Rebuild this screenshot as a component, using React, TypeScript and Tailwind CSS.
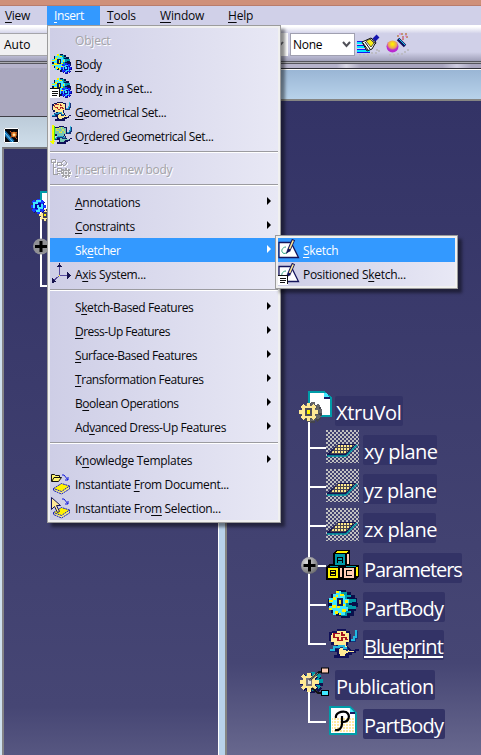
import React from "react";

type P = { x: number; y: number };

const Doc = () => (
  <g shapeRendering="crispEdges">
    <path d="M10 1H25L32 7V25H10Z" fill="#fff" stroke="#009ca8" strokeWidth="2" />
    <path d="M25 2h3l3 5h-6z" fill="#40e8ff" />
    <path d="M25 6h6v2h-6z" fill="#181860" />
  </g>
);

type GearProps = { cx: number; cy: number; r: number; fill: string; edge: string; shade?: string; under?: string; hub?: string; ring?: string };
function Gear({ cx, cy, r, fill, edge, shade, under = "#11104c", hub = "#fff200", ring }: GearProps) {
  const spokes = [0, 45, 90, 135];
  const body = (c: string, dx: number, dy: number, k = 0) => (
    <g transform={`translate(${cx + dx} ${cy + dy})`}>
      {spokes.map((a) => (
        <rect key={a} x={-r * 0.2 - k} y={-r - k} width={r * 0.4 + 2 * k} height={2 * (r + k)} fill={c} transform={`rotate(${a})`} />
      ))}
      <circle r={r * 0.7 + k} fill={c} />
    </g>
  );
  return (
    <g shapeRendering="crispEdges">
      {shade && body(under, r * 0.42, r * 0.14, 0.6)}
      {shade && body(shade, r * 0.45, -r * 0.08, 0)}
      {body(edge, 0.6, 0.5, 0.2)}
      {body(fill, 0, 0)}
      <rect x={cx - r * 0.36} y={cy - r * 0.42} width={r * 0.72} height={r * 0.84} fill={ring ?? edge} />
      <rect x={cx - r * 0.12} y={cy - r * 0.2} width={r * 0.28} height={r * 0.4} fill={hub} />
    </g>
  );
}

const Svg = ({ w, h, children, className = "" }: { w: number; h: number; children: React.ReactNode; className?: string }) => (
  <svg width={w} height={h} viewBox={`0 0 ${w} ${h}`} className={"block shrink-0 " + className}>{children}</svg>
);

const TealGear = () => (
  <g shapeRendering="crispEdges">
    <path d="M10 1h9v2h5v3h4v3h2v5h1v4h-2v4h-2v5h-4v2h-9v-2H9v-3H4v-6H1v-8h3V5h6z" fill="#08104c" />
    <path d="M14 3h6v3h4v4h5v3h-4v4h4v3h-5v4h-4v3h-6z" fill="#009ca8" />
    <path d="M20 8h7v2h-7zM22 14h7v2h-7zM19 20h8v2h-8z" fill="#081048" />
    <path d="M9 2h5v4h4v4h4v4h-3v4h2v4h-3v4h-5v-2h-4v2H6v-5H2v-4h3v-3H2V9h4V5h3z" fill="#40e8ff" />
    <path d="M9 2h3v2H9zM13 5h4v2h-4zM6 8h3v3H6zM2 11h4v2H2zM18 11h3v3h-3zM5 16h4v3H5zM8 22h3v3H8zM15 20h4v3h-4zM10 17h3v2h-3zM2 19h3v2H2zM9 6h2v2H9zM16 15h2v2h-2zM12 24h2v2h-2z" fill="#fff200" />
    <path d="M10 9h6v8h-6z" fill="#102060" /><path d="M12 11h2v4h-2z" fill="#ffe600" />
  </g>
);

const Blueprint = ({ green = false }: { green?: boolean }) => (
  <g shapeRendering="crispEdges">
    <path d="M4 3h5V1h9v2h4v3h1v8h-3v3h-1l4 5h4v-1h4v2h-3v2h-4v2h-3v3H6v-3h3v-3H4v-3h4v-4H3v-4H1V4h3z" fill="#101058" />
    <path d="M4 5h5V3h9v2h3v9h-3v3l3 6h5v1h-5l-4 2v2H12l-1-4v-7H6v-3H3V7h1z" fill={green ? "#76c8b4" : "#ffe994"} />
    <path d="M12 5.500H6v4h4v3h4v-3h4v2h2M14 4v3h3" fill="none" stroke={green ? "#e8e840" : "#a51020"} strokeWidth="1.300" />
    <path d="M2 23h4v-3h5v-1h5v2h3v2m10-20v7h-2v3h-4" fill="none" stroke="#143278" strokeWidth="2.500" />
    <path d="M2 22h4v-3h5v-1h5v2h3M28 2v7h-2v3h-3" fill="none" stroke="#22b8e0" strokeWidth="1.300" />
  </g>
);

const ListBadge = ({ x, y }: P) => (
  <g shapeRendering="crispEdges" transform={`translate(${x} ${y})`}>
    <path d="M0 0h10v10H0z" fill="#fff" />
    <path d="M0 0h10v1H0zM2 3h6v1H2zM2 5h6v1H2zM2 7h5v1H2zM9 1h1v8H9z" fill="#111" />
  </g>
);

const SketchArt = () => (
  <g>
    <path d="M1 3.500h12L20.500 18.500H1z" fill="#fff" stroke="#15155c" strokeWidth="1.300" />
    <path d="M8 8c-4 0-6 5-2 6.500 3 0 4-2 5-4" fill="none" stroke="#31a584" strokeWidth="1" />
    <path d="M15.500 0.500L10.500 12" stroke="#15155c" strokeWidth="3.400" /><path d="M15.200 1.500L11.500 10" stroke="#ffe994" strokeWidth="1.600" />
    <path d="M8 15l1-4 3 1z" fill="#15155c" />
  </g>
);

const Sheet = () => (
  <g>
    <path d="M3.500 15.500v2l8 3.500 8-5v-3" fill="#f8ef80" stroke="#1018c8" strokeDasharray="2 .7" />
    <path d="M3.500 15.500l8-5 8 2.500-8 5.500z" fill="#fff200" stroke="#1018c8" strokeDasharray="2 .7" />
    <path d="M12 2h2l4 5m0-3v3h-3" fill="none" stroke="#1018dc" />
  </g>
);

function MenuIcon({ kind }: { kind?: string }) {
  if (!kind) return <span className="w-[22px] shrink-0" />;
  return (
    <Svg w={22} h={22} className="mt-px">
      {(kind === "body" || kind === "bodyset") && (
        <g>
          <g transform="translate(1 0) scale(.64)"><TealGear /></g>
          <Gear cx={16} cy={15} r={5.2} fill="#1828ff" edge="#0808a0" hub="#40e8ff" />
          <path d="M13.500 17v-4h2v-1h2m1 2v3h-2v1h-2" stroke="#39c8ff" fill="none" shapeRendering="crispEdges" />
          {kind === "bodyset" && <ListBadge x={0} y={11} />}
        </g>
      )}
      {kind === "geo" && <g transform="translate(1 0) scale(.66)"><Blueprint /></g>}
      {kind === "ordered" && (
        <g>
          <g transform="translate(3 0) scale(.62)"><Blueprint green /></g>
          <path d="M2 0h2v16h1l-2 4-3-4h2z" fill="#f3ff00" shapeRendering="crispEdges" />
          <path d="M4.500 1v14" stroke="#45e010" />
        </g>
      )}
      {kind === "newbody" && (
        <g fill="none" shapeRendering="crispEdges">
          <path d="M2 2h4v3H2zM4 5v11h5M4 10h3M8 5h4v3H8zM8 11h4v3H8zM15 3l3 3-3 3-3-3z" stroke="#fff" />
          <path d="M1 1h4v3H1zM3 4v12h5M3 9h3M7 4h4v3H7zM7 10h4v3H7zM7 15h3M14 2l3 3-3 3-3-3z" stroke="#a0a0a3" />
          <Gear cx={16} cy={15} r={5} fill="#a3a3a6" edge="#fff" hub="#a3a3a6" ring="#e8e8ee" />
        </g>
      )}
      {kind === "axis" && (
        <g shapeRendering="crispEdges">
          <path d="M9.500 3v9h9M9 13l-6 5" fill="none" stroke="#54489c" strokeWidth="1" />
          <path d="M7 4l2.500-4L12 4zM17 9l4 3.500-4 3.500zM2 15l4 4-4 1z" fill="#17144f" />
          <path d="M9 12h1v1h-1z" fill="#ffe100" />
        </g>
      )}
      {kind === "doc" && (
        <g><Sheet /><path d="M1.500 8V1.500h3l1 1h4v2h2l-3 4h-7z" fill="#fff36d" stroke="#111" /><path d="M2 8l2-3.500h6" fill="none" stroke="#111" /></g>
      )}
      {kind === "sel" && (
        <g><Sheet /><path d="M1.500.5v12l3-3 3 6 2-1-3-6h4z" fill="#ffe994" stroke="#15155c" /></g>
      )}
      {(kind === "sketch" || kind === "possketch") && <g><SketchArt />{kind === "possketch" && <ListBadge x={0} y={12} />}</g>}
    </Svg>
  );
}

/* The character that follows "&" is the underlined access key. */
function Label({ text }: { text: string }) {
  const i = text.indexOf("&");
  if (i < 0) return <>{text}</>;
  return <>{text.slice(0, i)}<span className="underline decoration-1 underline-offset-2">{text[i + 1]}</span>{text.slice(i + 2)}</>;
}

type ItemProps = { text: string; kind?: string; sub?: boolean; hot?: boolean; off?: boolean; track?: string };
const Item = ({ text, kind, sub, hot, off, track = "tracking-[-0.4px]" }: ItemProps) => (
  <div className={"flex h-6 items-start whitespace-nowrap " + (hot ? "bg-[#3399ff] text-white" : off ? "text-[#a3a3a7] [text-shadow:1px_1px_#fff]" : "text-[#08080c]")}>
    <MenuIcon kind={kind} />
    <span className={"ml-[3px] mt-[4px] leading-[18px] " + track}><Label text={text} /></span>
    {sub && <span className={"ml-auto mr-[7px] mt-[7px] size-0 border-y-4 border-l-4 border-y-transparent " + (hot ? "border-l-white" : "border-l-black")} />}
  </div>
);
const Rule = () => <div className="mt-[3px] mb-[4px] h-[2px] border-t border-b border-t-[#9b9ba0] border-b-white" />;

const PlaneIcon = ({ id }: { id: string }) => (
  <Svg w={34} h={33}>
    <defs>
      <pattern id={id} width="4" height="4" patternUnits="userSpaceOnUse"><path d="M0 0h2v2H0zM2 2h2v2H2z" fill="#c0c0c0" shapeRendering="crispEdges" /></pattern>
      <pattern id={id + "y"} width="3" height="3" patternUnits="userSpaceOnUse"><path d="M0 0h3v3H0z" fill="#4a4650" /><path d="M0 0h2v2H0z" fill="#ffe88c" shapeRendering="crispEdges" /></pattern>
    </defs>
    <path d="M0 0h33v33H0z" fill={`url(#${id})`} />
    <path d="M12 14h18L20 26H1v-2z" fill="#15144f" />
    <path d="M12 15h16l-9 9H4z" fill={`url(#${id}y)`} />
    <path d="M1 26h19L31 15" fill="none" stroke="#009ca8" strokeWidth="1.500" />
  </Svg>
);
const CubesIcon = () => (
  <Svg w={34} h={31}>
    <g shapeRendering="crispEdges">
      <path d="M10 0h14v15h9v12l-4 3H0V17l3-3h4V3z" fill="#000" />
      <path d="M11 1h11l-2 2H10z" fill="#fff200" />
      <path d="M21 4h2v10h-2zM14 18h2v9h-2z" fill="#ffcdb5" />
      <path d="M9 4h10v11H9z" fill="#009ca8" />
      <path d="M2 18h10v10H2zM30 17h2v9h-2z" fill="#fff200" />
      <path d="M4 16h8v1H4zM20 16h10v1H20z" fill="#009ca8" />
      <path d="M18 18h10v10H18z" fill="#ffcdb5" />
      <g fill="none" stroke="#000" strokeWidth="1.400">
        <path d="M11.500 13V7.500h5V13M11.500 10.500h5M4.500 20.500h5v5h-5zM4.500 23h5M26 20.500h-5.500v5H26" />
      </g>
    </g>
  </Svg>
);
const PageP = () => (
  <Svg w={34} h={31} className="ml-[2px]">
    <defs><pattern id="dots" width="3" height="3" patternUnits="userSpaceOnUse"><path d="M0 0h2v2H0z" fill="#ffe9a0" /></pattern></defs>
    <path d="M2 1h20l6 6v21H2z" fill="#fff" stroke="#009ca8" strokeWidth="2" />
    <path d="M4 12h22v14H4z" fill="url(#dots)" /><path d="M22 2l5 5h-5z" fill="#40e8ff" /><path d="M22 6h5v2h-5z" fill="#181860" />
    <path d="M8 12C7 7 13 5 18 6c5 3 3 10-3 10M14 10v8c0 4-3 7-7 6" fill="none" stroke="#000" strokeWidth="2.200" />
  </Svg>
);
const PubIcon = () => (
  <Svg w={32} h={30}>
    <Gear cx={10} cy={15} r={9.500} fill="#ffe994" edge="#11105c" shade="#009ca8" hub="#e0e0e0" ring="#77737c" />
    <path d="M11 13L20 5h4M13 21l6 5h4" fill="none" stroke="#111" strokeWidth="1.800" />
    <path d="M10 14l9-8" stroke="#888" />
    <rect x="22.500" y="1" width="7" height="5" fill="#ffcdb5" stroke="#000" /><rect x="22.500" y="23.500" width="7" height="5" fill="#40e8ff" stroke="#000" />
  </Svg>
);

const Node = ({ name, icon, left = "pl-[27px]", box }: { name: string; icon: React.ReactNode; left?: string; box: string }) => (
  <div className={"flex h-[39px] items-start " + left}>
    <div className="flex w-[37px] shrink-0">{icon}</div>
    <div className={"h-[30px] whitespace-nowrap rounded-[2px] bg-[#333366] pt-[2px] leading-[29px] text-white " + box}>{name}</div>
  </div>
);

const Plus = () => (
  <Svg w={18} h={18}>
    <defs><radialGradient id="ball" cx=".35" cy=".3" r=".8"><stop offset="0" stopColor="#ddd" /><stop offset="1" stopColor="#606064" /></radialGradient></defs>
    <circle cx="8.500" cy="8.500" r="8.500" fill="url(#ball)" /><path d="M7 2.500h3v4.500h4.500v3H10v4.500H7V10H2.500V7H7z" fill="#000" />
  </Svg>
);

export default function App() {
  return (
    <div className="relative flex h-[755px] w-[481px] flex-col overflow-hidden bg-[#333366] font-['Open_Sans','Noto_Sans',sans-serif] text-[12px]">
      <div className="h-[6px] shrink-0 border-b border-[#b97c6b] bg-[#cf9079]" />
      <nav className="flex h-[19px] shrink-0 whitespace-nowrap bg-[#d0d0e8] leading-[20px] text-[#08080c]">
        <span className="w-[47px] pl-[5px] tracking-[-0.3px]"><Label text="&View" /></span>
        <span className="w-[53px] bg-[#3399ff] pl-[7px] tracking-[-0.4px] text-white"><Label text="&Insert" /></span>
        <span className="w-[60px] pl-[7px] tracking-[-0.2px]"><Label text="&Tools" /></span>
        <span className="w-[68px] tracking-[-0.2px]"><Label text="&Window" /></span>
        <span className="tracking-[-0.2px]"><Label text="&Help" /></span>
      </nav>
      <div className="flex h-[36px] shrink-0 items-start bg-[linear-gradient(#fff_0,#fff_5%,#d0d0e8_24%,#d0d0e8_75%,#9f9fb8_100%)] pt-[8px]">
        <div className="h-[23px] w-[60px] border border-l-0 border-[#a5a5aa] bg-[#f0f0f2] pl-[4px] leading-[22px]">Auto</div>
        <div className="ml-[200px] h-[23px] w-[28px] bg-white pl-[20px] pt-[8px]">
          <Svg w={9} h={7}><path d="M-4 1l3.500 4L3 1" fill="none" stroke="#707078" strokeWidth="1.800" /></Svg>
        </div>
        <div className="ml-[2px] flex h-[23px] w-[65px] items-center justify-between border border-[#a0a0b0] bg-white pl-[2px] pr-[3px] leading-[20px]">
          <span className="tracking-[-0.3px]">None</span>
          <Svg w={9} h={7}><path d="M1 1l3.500 4L8 1" fill="none" stroke="#505058" strokeWidth="2" /></Svg>
        </div>
        <Svg w={24} h={24} className="ml-[2px]">
          <g shapeRendering="crispEdges">
            <path d="M0 10h7M0 14h8M0 18h13" stroke="#00e8ff" strokeWidth="2" /><path d="M0 8.500h7M0 12.500h8M0 16.500h10M0 19.500h13" stroke="#1616f0" strokeWidth="1" />
            <path d="M2 22h2m2 0h2m2 0h2m2-2h2m2 0h2m1-2h2m-4-1h2" stroke="#bcbcc4" strokeWidth="2" />
          </g>
          <path d="M5 9l5 9 5-2 4-7-5-4z" fill="#fff" stroke="#111" /><path d="M9 8l5 6 3-4-4-4z" fill="#f7ec19" stroke="#111" strokeWidth=".7" /><path d="M14 5l5 6M6 10l5 7M8 9l5 7" stroke="#111" /><path d="M17 7l4-4" stroke="#1616b0" strokeWidth="4" />
        </Svg>
        <Svg w={24} h={24} className="ml-[5px]">
          <defs><radialGradient id="orb" cy=".3"><stop offset=".1" stopColor="#ffee00" /><stop offset=".7" stopColor="#e9a060" /><stop offset="1" stopColor="#b92bd0" /></radialGradient></defs>
          <path d="M3 22h2m2 0h2m2-1h2m2 0h2m1-2h2m1-2h2" stroke="#bcbcc4" strokeWidth="2" />
          <circle cx="6.500" cy="13.500" r="6" fill="url(#orb)" /><path d="M12 6l7 7" stroke="#101060" strokeWidth="3.300" /><path d="M13 6l6 6" stroke="#18cde6" />
          <path d="M11 3h2m2-2h2m2 0h2m-5 3h2m2 0h2m-6 2h2" stroke="#bd7d52" strokeWidth="1.500" /><path d="M13 1h2m4 2h2m-5 2h2" stroke="#d867ca" strokeWidth="1" />
        </Svg>
      </div>

      <main className="relative flex-1 bg-[#aaa8bf]">
        <div className="h-[3px] border-y border-[#55555d] bg-[#aaaab0]" />
        <div className="h-1 bg-[linear-gradient(90deg,#b6b3cb_70%,#dad8e6_72%,#aaa6bf_75%,#aaa6bf_92%,#cfcde0_95%,#aaa6bf_98%)]" />
        <section className="absolute left-0 top-[55px] flex h-[639px] w-[219px] flex-col border-t border-[#404048] bg-[#cfe0ee]">
          <div className="flex h-[30px] shrink-0 items-start bg-[linear-gradient(#bccbd9,#cfdeea)] pl-[4px] pt-[11px]">
            <Svg w={15} h={15}>
              <path d="M0 0h15v15H0z" fill="#05050a" /><path d="M0 4l9 10" stroke="#1769ac" strokeWidth="4" /><path d="M1 5l8 9" stroke="#69d9ff" /><circle cx="10" cy="6.500" r="2.700" fill="#e98327" /><path d="M6 3l7 8m-7-1l7-6" stroke="#d35b22" /><circle cx="10" cy="6.800" r="1.300" fill="#ffe6a8" /><path d="M.5.5h14v14H.5z" fill="none" stroke="#fff" />
            </Svg>
          </div>
          <div className="ml-[2px] flex-1 border-l-2 border-r border-t-2 border-l-[#858588] border-r-black border-t-[#77777c] bg-[linear-gradient(#333366,#464674_92%,#575781)]">
            <div className="ml-[26px] mt-[41px] h-[98px] w-[30px]">
              <Svg w={30} h={98}>
                <path d="M11 18v78h18" fill="none" stroke="#fff" strokeWidth="2" />
                <path d="M11 18V2h18v20H11" fill="#fff" stroke="#009ca8" strokeWidth="2" />
                <Gear cx={15} cy={25} r={6} fill="#ffe994" edge="#41405a" />
                <Gear cx={8} cy={16} r={7.5} fill="#1838ff" edge="#0505a0" hub="#40e8ff" />
                <path d="M4 18v-5h3v-2h4m1 3v4h-3v3H6" fill="none" stroke="#40e8ff" strokeWidth="1.800" shapeRendering="crispEdges" />
                <g transform="translate(3 48)"><circle cx="8" cy="8.500" r="8" fill="#919195" /><path d="M6.500 3h3v4H14v3H9.500v4h-3v-4H2V7h4.500z" fill="#000" /></g>
              </Svg>
            </div>
          </div>
        </section>

        <section className="absolute left-[218px] top-[7px] flex h-[687px] w-[263px] flex-col border-l border-t border-l-white border-t-[#303038] bg-[#b8d2ea]">
          <div className="h-[30px] shrink-0 border-t border-white bg-[linear-gradient(#9ab6d5,#b8d2ea)]" />
          <div className="ml-[6px] flex-1 border-l-2 border-t-2 border-l-[#858583] border-t-[#858583] bg-[linear-gradient(#333366_0,#464674_86%,#68688e_100%)]">
            <div className="relative ml-[72px] mt-[290px]">
              <svg width="40" height="350" viewBox="0 0 40 350" className="absolute left-0 top-0">
                <path d="M10 30V253H27M10 57H27M10 96H27M10 135H27M10 175H27M10 214H27M10 300V331H27" fill="none" stroke="#fff" strokeWidth="2" />
              </svg>
              <div className="absolute left-[2px] top-[166px]"><Plus /></div>
              <div className="relative text-[20px]">
                <Node name="XtruVol" left="pl-0" box="mt-[5px] w-[68px] -ml-px pl-px tracking-[-0.4px]" icon={<Svg w={36} h={34}><Doc /><Gear cx={9.5} cy={21} r={9.3} fill="#ffe994" edge="#55555a" shade="#66666a" under="#44444c" ring="#4d4b58" /></Svg>} />
                <Node name="xy plane" box="mt-[5px] w-[74px] pl-px tracking-[-0.5px]" icon={<PlaneIcon id="a" />} />
                <Node name="yz plane" box="mt-[5px] w-[74px] pl-px tracking-[-0.5px]" icon={<PlaneIcon id="b" />} />
                <Node name="zx plane" box="mt-[5px] w-[73px] pl-px tracking-[-0.5px]" icon={<PlaneIcon id="c" />} />
                <Node name="Parameters" box="mt-[6px] w-[99px] pl-px tracking-[-1.05px]" icon={<div className="pt-[3px]"><CubesIcon /></div>} />
                <Node name="PartBody" box="mt-[6px] w-[82px] pl-px tracking-[-0.8px]" icon={<div className="pl-px pt-[3px]"><Svg w={34} h={31}><TealGear /></Svg></div>} />
                <Node name="Blueprint" box="mt-[5px] w-[81px] pl-px tracking-[-0.8px] underline decoration-2 underline-offset-2" icon={<div className="pl-[2px] pt-[3px]"><Svg w={32} h={31}><Blueprint /></Svg></div>} />
                <Node name="Publication" left="pl-0" box="mt-[6px] w-[100px] -ml-px pl-px tracking-[-0.55px]" icon={<div className="pt-[3px]"><PubIcon /></div>} />
                <Node name="PartBody" box="mt-[6px] w-[82px] pl-px tracking-[-0.8px]" icon={<div className="pt-[3px]"><PageP /></div>} />
              </div>
            </div>
          </div>
        </section>
      </main>

      <div className="absolute left-[47px] top-[25px] h-[498px] w-[234px] border border-[#9c9c9c] bg-[#f0f0f0] p-[2px] shadow-[4px_4px_3px_rgba(0,0,0,.45)]">
        <div className="h-full bg-[linear-gradient(90deg,#cecee6,#e8e8f5)]">
          <Item text="Ob&ject" off track="tracking-[-0.2px]" />
          <Item text="&Body" kind="body" />
          <Item text="Bod&y in a Set..." kind="bodyset" track="tracking-[-0.3px]" />
          <Item text="&Geometrical Set..." kind="geo" />
          <Item text="O&rdered Geometrical Set..." kind="ordered" />
          <Rule />
          <Item text="&Insert in new body" kind="newbody" off track="tracking-[-0.35px]" />
          <Rule />
          <Item text="&Annotations" sub track="tracking-[-0.25px]" />
          <Item text="&Constraints" sub />
          <Item text="Sk&etcher" sub hot />
          <Item text="A&xis System..." kind="axis" track="tracking-[-0.35px]" />
          <Rule />
          <Item text="S&ketch-Based Features" sub />
          <Item text="&Dress-Up Features" sub track="tracking-[-0.5px]" />
          <Item text="&Surface-Based Features" sub track="tracking-[-0.45px]" />
          <Item text="&Transformation Features" sub track="tracking-[-0.45px]" />
          <Item text="B&oolean Operations" sub track="tracking-[-0.45px]" />
          <Item text="Ad&vanced Dress-Up Features" sub />
          <Rule />
          <Item text="K&nowledge Templates" sub track="tracking-[-0.3px]" />
          <Item text="Instantiate &From Document..." kind="doc" track="tracking-[-0.34px]" />
          <Item text="Instantiate Fro&m Selection..." kind="sel" track="tracking-[-0.34px]" />
        </div>
      </div>
      <div className="absolute left-[275px] top-[235px] h-[54px] w-[183px] border border-[#9c9c9c] bg-[#f0f0f0] p-[2px] shadow-[4px_4px_3px_rgba(0,0,0,.45)]">
        <div className="bg-[linear-gradient(90deg,#cecee6,#e8e8f5)]">
          <Item text="&Sketch" kind="sketch" hot track="tracking-[-0.3px]" />
          <Item text="Positioned S&ketch..." kind="possketch" track="tracking-[-0.3px]" />
        </div>
      </div>
    </div>
  );
}
